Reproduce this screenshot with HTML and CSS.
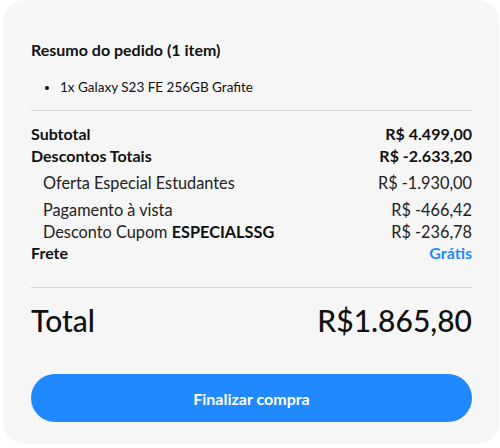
FILE: index.html
```html
<!DOCTYPE html>
<html lang="pt-BR">
<head>
<meta charset="utf-8">
<link rel="stylesheet" href="styles.css">
</head>
<body>
<div class="card">
  <h2 class="title">Resumo do pedido (1 item)</h2>
  <ul class="items">
    <li>1x Galaxy S23 FE 256GB Grafite</li>
  </ul>
  <hr class="divider">
  <div class="summary">
    <div class="row strong"><span>Subtotal</span><span>R$ 4.499,00</span></div>
    <div class="row strong"><span>Descontos Totais</span><span>R$ -2.633,20</span></div>
    <div class="row sub first"><span>Oferta Especial Estudantes</span><span>R$ -1.930,00</span></div>
    <div class="row sub second"><span>Pagamento à vista</span><span>R$ -466,42</span></div>
    <div class="row sub"><span>Desconto Cupom <b>ESPECIALSSG</b></span><span>R$ -236,78</span></div>
    <div class="row strong last"><span>Frete</span><span class="free">Grátis</span></div>
  </div>
  <hr class="divider total-divider">
  <div class="total"><span>Total</span><span>R$1.865,80</span></div>
  <button class="checkout">Finalizar compra</button>
</div>
</body>
</html>
```
FILE: styles.css
```css
html, body {
  margin: 0;
  padding: 0;
  background: #ffffff;
}
body {
  font-family: "Lato", "Noto Sans", sans-serif;
  color: #111111;
}
.card {
  margin-left: 3px;
  width: 496px;
  height: 444px;
  box-sizing: border-box;
  background: #f6f6f6;
  border-radius: 22px;
  padding: 40px 27px 0 28px;
  display: flex;
  flex-direction: column;
}
.title {
  margin: 0;
  font-size: 16px;
  font-weight: 700;
  line-height: 20px;
}
.items {
  margin: 19px 0 0 0;
  padding-left: 29px;
  font-size: 13.5px;
  line-height: 16px;
}
.divider {
  margin: 15px 0 0 0;
  border: 0;
  border-top: 1px solid #d4d4d4;
  height: 0;
}
.summary {
  margin-top: 12px;
}
.row {
  display: flex;
  justify-content: space-between;
  align-items: baseline;
}
.row.strong {
  font-size: 16px;
  font-weight: 700;
  line-height: 22px;
}
.row.sub {
  font-size: 16.3px;
  line-height: 22px;
  padding-left: 12px;
  color: #222222;
}
.row.sub b {
  color: #111111;
}
.row.first {
  margin-top: 5px;
}
.row.second {
  margin-top: 5px;
}
.row.last {
  margin-top: -1px;
}
.free {
  color: #2189ff;
}
.total-divider {
  margin-top: 23px;
}
.total {
  display: flex;
  justify-content: space-between;
  align-items: baseline;
  font-size: 30px;
  line-height: 40px;
  margin-top: 12px;
  font-weight: 500;
}
.checkout {
  margin-top: 34px;
  height: 48px;
  border: 0;
  border-radius: 24px;
  background: #2189ff;
  color: #ffffff;
  font-family: inherit;
  font-size: 16px;
  font-weight: 700;
  width: 100%;
}
```
